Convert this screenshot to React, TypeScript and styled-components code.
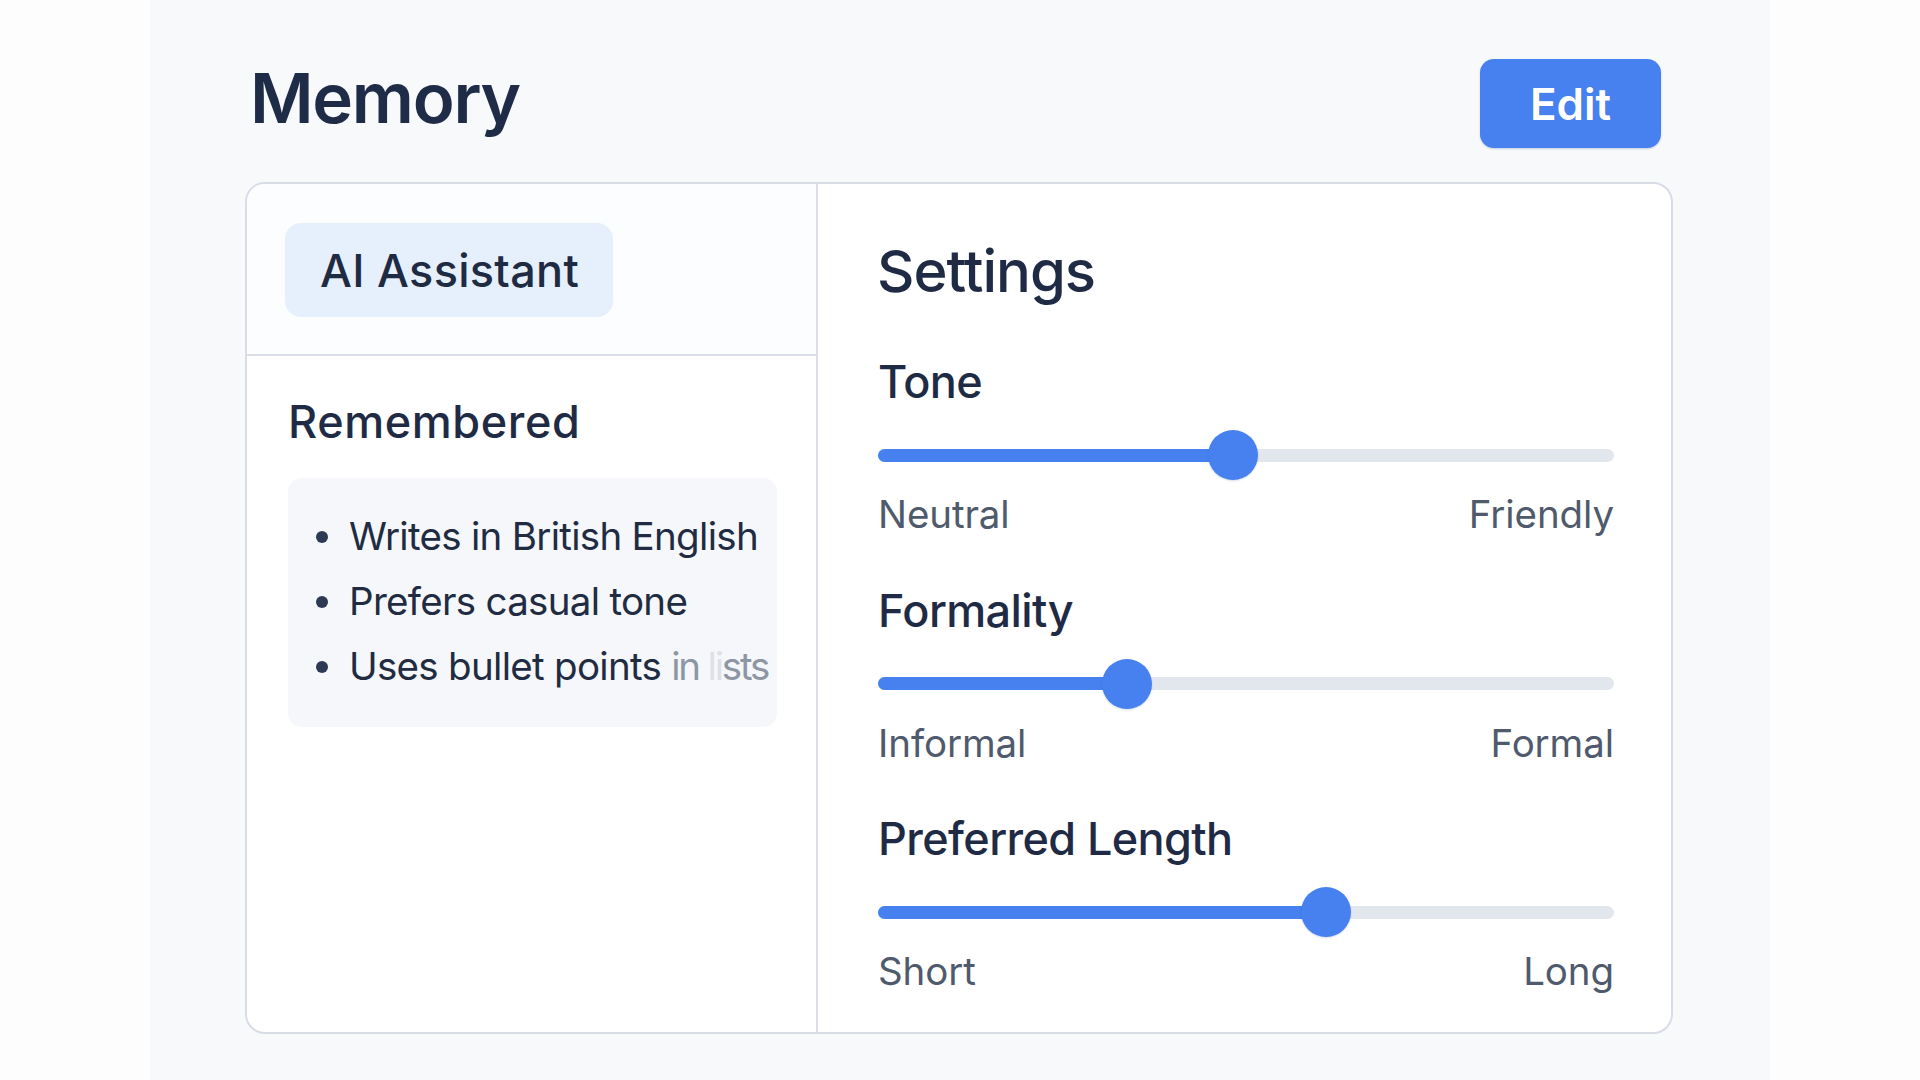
import React from "react";
import styled, { createGlobalStyle } from "styled-components";

const GlobalStyle = createGlobalStyle`
  html, body {
    margin: 0;
    padding: 0;
    background: #fdfdfe;
    font-family: "Inter", "Liberation Sans", sans-serif;
    overflow: hidden;
  }
  * { box-sizing: border-box; }
`;

const Panel = styled.main`
  width: 1620px;
  height: 1080px;
  margin-left: 150px;
  padding: 59px 97px 0 95px;
  background: #f8f9fb;
  display: flex;
  flex-direction: column;
`;

const Header = styled.header`
  display: flex;
  justify-content: space-between;
  align-items: flex-start;
  padding: 0 12px 0 5px;
`;

const Title = styled.h1`
  margin: 5px 0 0 0;
  font-size: 69px;
  line-height: 1;
  font-weight: 600;
  color: #1f2c48;
  letter-spacing: -1.3px;
`;

const EditButton = styled.button`
  width: 181px;
  height: 89px;
  border: none;
  border-radius: 14px;
  background: #4780ef;
  color: #ffffff;
  font-family: inherit;
  font-size: 44px;
  font-weight: 600;
  line-height: 1;
  cursor: pointer;
  box-shadow: 0 1px 2px rgba(40, 80, 160, 0.25);
`;

const Card = styled.section`
  margin-top: 34px;
  height: 852px;
  border: 2px solid #d8dce5;
  border-radius: 20px;
  background: #ffffff;
  display: grid;
  grid-template-columns: 571px 1fr;
  overflow: hidden;
`;

const LeftColumn = styled.div`
  border-right: 2px solid #dadee6;
  display: flex;
  flex-direction: column;
`;

const ChipArea = styled.div`
  padding: 39px 0 37px 38px;
  border-bottom: 2px solid #dadee6;
  background: #fcfdfe;
`;

const Chip = styled.div`
  display: inline-flex;
  align-items: center;
  height: 94px;
  padding: 0 34px 0 35px;
  border-radius: 16px;
  background: #e6f0fc;
  color: #1f2b43;
  font-size: 45px;
  font-weight: 500;
  letter-spacing: 0.3px;
`;

const MemorySection = styled.div`
  padding: 43px 39px 0 41px;
  display: flex;
  flex-direction: column;
  gap: 34px;
`;

const SectionTitle = styled.h2`
  margin: 0;
  font-size: 45px;
  line-height: 1;
  font-weight: 500;
  color: #1f2b45;
  letter-spacing: 0.6px;
`;

const MemoryBox = styled.ul`
  list-style: none;
  margin: 0;
  padding: 26px 20px 28px 28px;
  border-radius: 14px;
  background: #f5f7fa;
  height: 249px;
`;

const MemoryItem = styled.li`
  display: flex;
  align-items: center;
  gap: 21px;
  height: 65px;
  font-size: 38.5px;
  line-height: 65px;
  color: #212c43;
  letter-spacing: -0.7px;
  white-space: nowrap;
`;

const Bullet = styled.span`
  width: 12px;
  height: 12px;
  border-radius: 50%;
  background: #2d3a54;
  flex: none;
`;

const FadedRun = styled.span`
  letter-spacing: -2.2px;
`;

const Faded = styled.span<{ $ghost?: boolean }>`
  color: ${(p) => (p.$ghost ? "#dde1e7" : "#8e96a3")};
`;

const RightColumn = styled.div`
  padding: 58px 57px 0 60px;
  display: flex;
  flex-direction: column;
`;

const SettingsTitle = styled.h2`
  margin: 0 0 59px -1px;
  font-size: 58px;
  line-height: 1;
  font-weight: 500;
  color: #1f2b45;
  letter-spacing: -1px;
`;

const Groups = styled.div`
  display: flex;
  flex-direction: column;
  gap: 54px;
`;

const Group = styled.div`
  display: flex;
  flex-direction: column;
`;

const GroupLabel = styled.h3`
  margin: 0 0 26px 0;
  font-size: 45px;
  line-height: 1;
  font-weight: 500;
  color: #1f2b45;
  letter-spacing: -0.6px;
`;

const SliderBox = styled.div`
  position: relative;
  height: 50px;
  display: flex;
  align-items: center;
`;

const Rail = styled.div`
  width: 100%;
  height: 13px;
  border-radius: 7px;
  background: #e2e6ed;
`;

const Fill = styled.div`
  position: absolute;
  left: 0;
  top: 18.5px;
  height: 13px;
  border-radius: 7px;
  background: #4780ef;
`;

const Thumb = styled.div`
  position: absolute;
  top: 0;
  width: 50px;
  height: 50px;
  margin-left: -25px;
  border-radius: 50%;
  background: #4780ef;
  box-shadow: 0 1px 2px rgba(40, 80, 160, 0.2);
`;

const Ends = styled.div`
  margin-top: 15px;
  display: flex;
  justify-content: space-between;
  font-size: 38.5px;
  line-height: 1;
  color: #4f5a6c;
  letter-spacing: -0.1px;
`;

type SliderProps = { label: string; low: string; high: string; value: number };

function Slider({ label, low, high, value }: SliderProps) {
  const pct = `${value}%`;
  return (
    <Group>
      <GroupLabel>{label}</GroupLabel>
      <SliderBox>
        <Rail />
        <Fill style={{ width: pct }} />
        <Thumb style={{ left: pct }} />
      </SliderBox>
      <Ends>
        <span>{low}</span>
        <span>{high}</span>
      </Ends>
    </Group>
  );
}

export default function App() {
  return (
    <>
      <GlobalStyle />
      <Panel>
        <Header>
          <Title>Memory</Title>
          <EditButton>Edit</EditButton>
        </Header>
        <Card>
          <LeftColumn>
            <ChipArea>
              <Chip>AI Assistant</Chip>
            </ChipArea>
            <MemorySection>
              <SectionTitle>Remembered</SectionTitle>
              <MemoryBox>
                <MemoryItem>
                  <Bullet />
                  <span>Writes in British English</span>
                </MemoryItem>
                <MemoryItem>
                  <Bullet />
                  <span>Prefers casual tone</span>
                </MemoryItem>
                <MemoryItem>
                  <Bullet />
                  <span>
                    Uses bullet points{" "}
                    <FadedRun>
                      <Faded>in </Faded>
                      <Faded $ghost>li</Faded>
                      <Faded>sts</Faded>
                    </FadedRun>
                  </span>
                </MemoryItem>
              </MemoryBox>
            </MemorySection>
          </LeftColumn>
          <RightColumn>
            <SettingsTitle>Settings</SettingsTitle>
            <Groups>
              <Slider label="Tone" low="Neutral" high="Friendly" value={48.2} />
              <Slider label="Formality" low="Informal" high="Formal" value={33.8} />
              <Slider label="Preferred Length" low="Short" high="Long" value={60.9} />
            </Groups>
          </RightColumn>
        </Card>
      </Panel>
    </>
  );
}
